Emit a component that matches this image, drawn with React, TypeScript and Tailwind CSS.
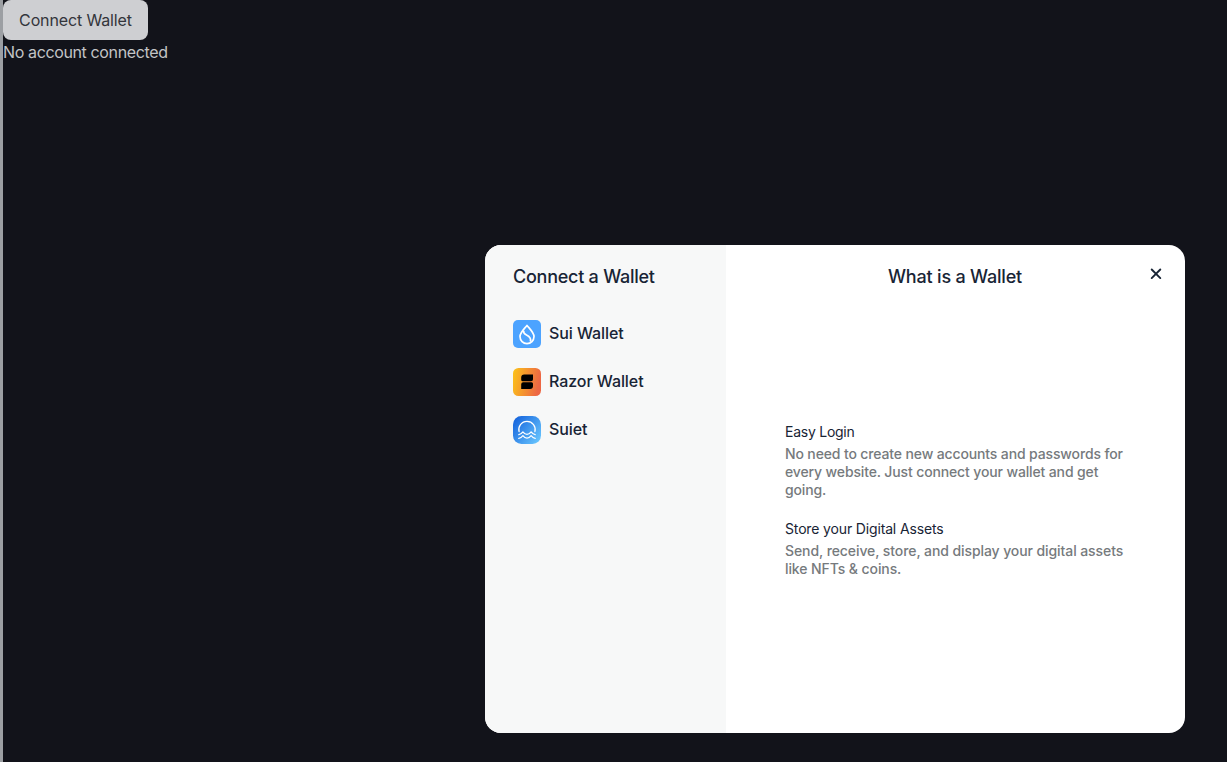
import React from 'react';

function SuiIcon() {
  return (
    <svg width="28" height="28" viewBox="0 0 28 28" fill="none">
      <rect width="28" height="28" rx="5" fill="#4ca3ff" />
      <path
        d="M14 5.400c-2.400 3.200-7 7.100-7 11.200a7 7 0 0 0 14 0C21 12.500 16.400 8.600 14 5.400Z"
        stroke="#fff"
        strokeWidth="1.700"
        strokeLinejoin="round"
      />
      <path d="M10.600 10.600c-.4 2.200.9 3.400 2.900 4.400 3.200 1.600 5 3.300 3.800 6.600" stroke="#fff" strokeWidth="1.700" />
    </svg>
  );
}

function RazorIcon() {
  return (
    <svg width="28" height="28" viewBox="0 0 28 28">
      <defs>
        <linearGradient id="razor" x1="0" y1="0" x2="1" y2="0.2">
          <stop stopColor="#fcc419" />
          <stop offset="1" stopColor="#ed6744" />
        </linearGradient>
      </defs>
      <rect width="28" height="28" rx="5.500" fill="url(#razor)" />
      <path d="M11.200 6.600H20v4.600a2 2 0 0 1-2 2H9.700a1.500 1.500 0 0 1-1.500-1.500V9.600a3 3 0 0 1 3-3Z" />
      <path d="M10.200 14.300h8.300a1.500 1.500 0 0 1 1.500 1.500v2.200a3 3 0 0 1-3 3H8.200v-4.700a2 2 0 0 1 2-2Z" />
    </svg>
  );
}

function SuietIcon() {
  return (
    <svg width="28" height="28" viewBox="0 0 28 28" fill="none">
      <defs>
        <linearGradient id="suiet" x1="0" y1="0.1" x2="1" y2="0.9">
          <stop stopColor="#1462dc" />
          <stop offset="1" stopColor="#6ac8ff" />
        </linearGradient>
      </defs>
      <rect width="28" height="28" rx="8.500" fill="url(#suiet)" />
      <g stroke="#fff" strokeWidth="1.250" strokeLinecap="round" strokeLinejoin="round">
        <path d="M6.100 15.700a8.200 8.200 0 1 1 15.800 0" />
        <path d="M5.800 18.600c1.700-.2 2.900-1.100 4.100-2.700 1.200 1.600 2.400 2.500 4.100 2.500s2.900-.9 4.100-2.500c1.200 1.600 2.400 2.500 4.100 2.700" />
        <path d="M5.800 22.400c1.700-.2 2.900-1.100 4.100-2.700 1.200 1.600 2.400 2.500 4.100 2.500s2.900-.9 4.100-2.500c1.200 1.600 2.400 2.500 4.100 2.700" />
      </g>
    </svg>
  );
}

const wallets = [
  { name: 'Sui Wallet', icon: <SuiIcon /> },
  { name: 'Razor Wallet', icon: <RazorIcon /> },
  { name: 'Suiet', icon: <SuietIcon /> },
];

export default function App() {
  return (
    <div className="relative h-[762px] w-[1227px] overflow-hidden border-l-[3px] border-[#9c9fa3] bg-[#12131a] font-['Inter',sans-serif]">
      <button className="block h-10 w-[145px] rounded-lg bg-[#cecfd2] text-base tracking-[-0.13px] whitespace-nowrap text-[#33353b]">
        Connect Wallet
      </button>
      <div className="text-base leading-6 tracking-[-0.37px] text-[#c3c4c6]">No account connected</div>

      <div
        role="dialog"
        className="absolute top-[245px] left-[482px] flex h-[488px] w-[700px] overflow-hidden rounded-2xl bg-white text-[#182435]"
      >
        <div className="flex w-[241px] shrink-0 flex-col bg-[#f7f8f8] px-5 pt-5">
          <h2 className="pl-2 text-lg leading-6 font-medium tracking-[-0.25px]">Connect a Wallet</h2>
          <ul className="mt-[23px] flex flex-col gap-1">
            {wallets.map((w) => (
              <li key={w.name} className="flex h-11 items-center gap-2 px-2">
                {w.icon}
                <span className="pb-0.5 text-base leading-5 font-medium tracking-[-0.07px]">{w.name}</span>
              </li>
            ))}
          </ul>
        </div>
        <div className="relative flex flex-1 flex-col pt-5 pr-[60px] pl-[59px]">
          <h2 className="text-center text-lg leading-6 font-medium tracking-[-0.2px]">What is a Wallet</h2>
          <button aria-label="Close" className="absolute top-[23px] right-[23px] flex size-3 items-center justify-center">
            <svg width="12" height="12" viewBox="0 0 12 12" stroke="#182435" strokeWidth="1.900" strokeLinecap="round">
              <path d="M1.700 1.500 10.300 10.100M10.300 1.500 1.700 10.100" />
            </svg>
          </button>
          <div className="mt-[134px] flex flex-col gap-[21px] text-sm leading-[18px] whitespace-nowrap">
            <div>
              <h3 className="tracking-[-0.25px]">Easy Login</h3>
              <p className="mt-1 font-medium tracking-[-0.135px] text-[#767a7d]">
                No need to create new accounts and passwords for
                <br />
                every website. Just connect your wallet and get
                <br />
                going.
              </p>
            </div>
            <div>
              <h3 className="tracking-[-0.15px]">Store your Digital Assets</h3>
              <p className="mt-1 font-medium tracking-[-0.09px] text-[#767a7d]">
                Send, receive, store, and display your digital assets
                <br />
                like NFTs &amp; coins.
              </p>
            </div>
          </div>
        </div>
      </div>
    </div>
  );
}
